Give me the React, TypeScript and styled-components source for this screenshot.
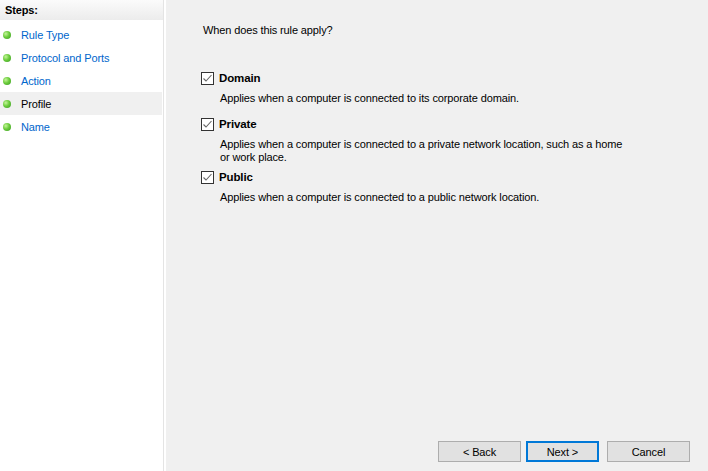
import React from "react";
import styled, { createGlobalStyle } from "styled-components";

const Global = createGlobalStyle`
  html, body { margin: 0; padding: 0; }
  body {
    width: 708px;
    height: 471px;
    overflow: hidden;
    font-family: "Liberation Sans", Arial, sans-serif;
    font-size: 11px;
    letter-spacing: -0.12px;
    color: #000;
    background: #f0f0f0;
  }
`;

const Window = styled.div`
  display: flex;
  width: 708px;
  height: 471px;
`;

const Sidebar = styled.div`
  width: 163px;
  background: #fff;
  border-right: 1px solid #e4e4e4;
  display: flex;
  flex-direction: column;
  flex-shrink: 0;
`;

const Spacer = styled.div`
  width: 2px;
  background: #fff;
  flex-shrink: 0;
`;

const SideHeader = styled.div`
  height: 20px;
  display: flex;
  align-items: center;
  padding-left: 5px;
  font-weight: bold;
  background: linear-gradient(to bottom, #fbfbfb, #ececec);
  margin-bottom: 3px;
`;

const StepRow = styled.div<{ $active?: boolean }>`
  height: 23px;
  width: 162px;
  display: flex;
  align-items: center;
  background: ${(p) => (p.$active ? "#f0f0f0" : "transparent")};
  color: ${(p) => (p.$active ? "#000" : "#0066cc")};
`;

const Bullet = styled.span`
  width: 8px;
  height: 8px;
  border-radius: 50%;
  margin-left: 3px;
  margin-right: 10px;
  background: radial-gradient(circle at 35% 35%, #c4f59a 0%, #6ccc3c 45%, #379a22 100%);
`;

const Main = styled.div`
  flex: 1;
  display: flex;
  flex-direction: column;
  background: #f0f0f0;
`;

const Content = styled.div`
  flex: 1;
  padding: 24px 0 0 37px;
`;

const Title = styled.div`
  line-height: 13px;
  margin-bottom: 35px;
`;

const Option = styled.div`
  margin-bottom: 7px;
`;

const CheckRow = styled.div`
  display: flex;
  align-items: center;
  height: 13px;
  line-height: 13px;
`;

const Box = styled.span`
  width: 11px;
  height: 11px;
  border: 1px solid #333;
  background: #fff;
  display: flex;
  align-items: center;
  justify-content: center;
  margin-left: -2px;
  margin-right: 5px;
`;

const Label = styled.span`
  font-weight: bold;
  font-size: 11.5px;
`;

const Desc = styled.div`
  margin: 7px 0 0 17px;
  line-height: 13px;
  min-height: 19px;
  width: 410px;
`;

const ButtonBar = styled.div`
  display: flex;
  justify-content: flex-end;
  padding: 0 18px 9px 0;
`;

const Button = styled.button<{ $primary?: boolean; $w: number; $ml: number }>`
  width: ${(p) => p.$w}px;
  height: 21px;
  margin-left: ${(p) => p.$ml}px;
  box-sizing: border-box;
  font-family: inherit;
  font-size: 11px;
  letter-spacing: -0.12px;
  color: #000;
  background: #e1e1e1;
  border: ${(p) => (p.$primary ? "2px solid #0078d7" : "1px solid #adadad")};
  padding: 0;
`;

const Check = () => (
  <svg width="11" height="11" viewBox="0 0 11 11">
    <path d="M1.5 5.5 L4 8 L9.5 2" fill="none" stroke="#666" strokeWidth="1.1" />
  </svg>
);

const steps = ["Rule Type", "Protocol and Ports", "Action", "Profile", "Name"];

const options = [
  { label: "Domain", desc: "Applies when a computer is connected to its corporate domain." },
  {
    label: "Private",
    desc: "Applies when a computer is connected to a private network location, such as a home or work place.",
  },
  { label: "Public", desc: "Applies when a computer is connected to a public network location." },
];

export default function App() {
  return (
    <>
      <Global />
      <Window>
        <Sidebar>
          <SideHeader>Steps:</SideHeader>
          {steps.map((s) => (
            <StepRow key={s} $active={s === "Profile"}>
              <Bullet />
              {s}
            </StepRow>
          ))}
        </Sidebar>
        <Spacer />
        <Main>
          <Content>
            <Title>When does this rule apply?</Title>
            {options.map((o) => (
              <Option key={o.label}>
                <CheckRow>
                  <Box>
                    <Check />
                  </Box>
                  <Label>{o.label}</Label>
                </CheckRow>
                <Desc>{o.desc}</Desc>
              </Option>
            ))}
          </Content>
          <ButtonBar>
            <Button $w={83} $ml={0}>&lt; Back</Button>
            <Button $w={73} $ml={5} $primary>Next &gt;</Button>
            <Button $w={83} $ml={8}>Cancel</Button>
          </ButtonBar>
        </Main>
      </Window>
    </>
  );
}
